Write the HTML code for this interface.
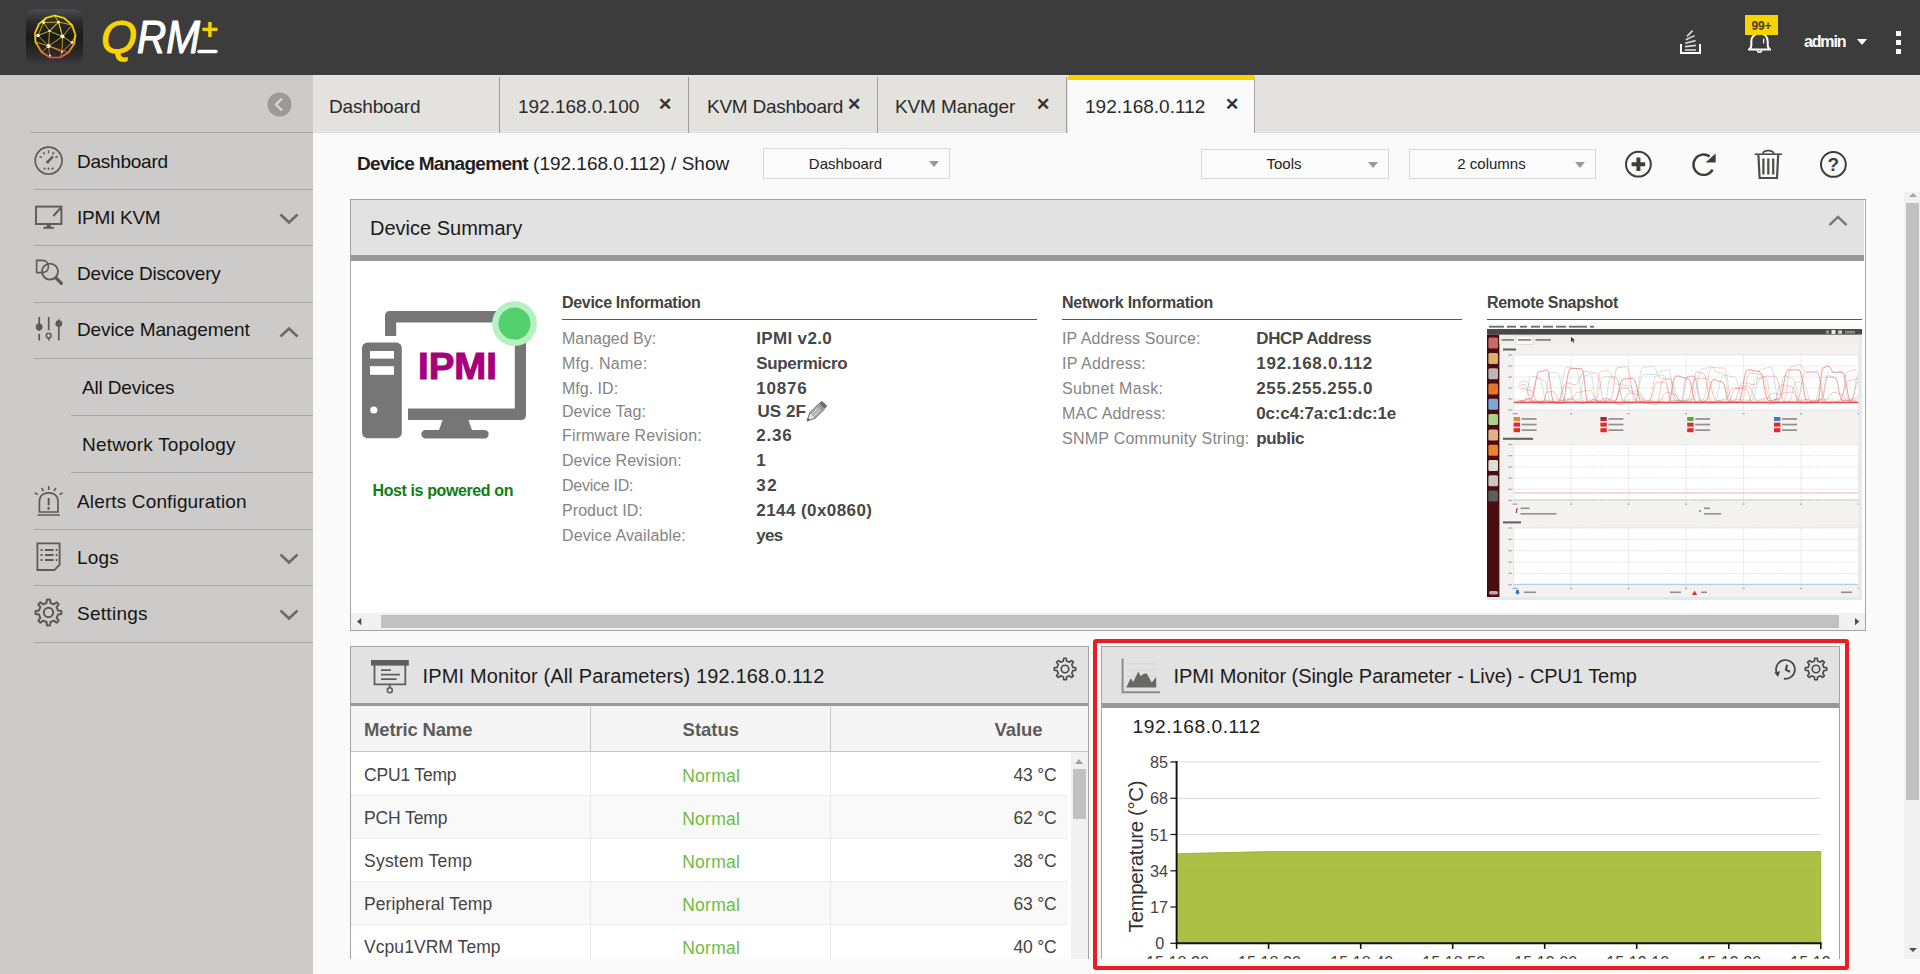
<!DOCTYPE html>
<html lang="en">
<head>
<meta charset="utf-8">
<title>QRM+ Device Management</title>
<style>
*{box-sizing:border-box;margin:0;padding:0}
html,body{width:1920px;height:974px;overflow:hidden;background:#fafafa;font-family:"Liberation Sans",sans-serif;color:#1c1c1c}
.abs{position:absolute}
#app{position:relative;width:1920px;height:974px;overflow:hidden}
/* top bar */
#top{position:absolute;left:0;top:0;width:1920px;height:75px;background:#3c3c3c;z-index:5}
/* sidebar */
#side{position:absolute;left:0;top:75px;width:313px;height:899px;background:#cccbc9}
.sline{position:absolute;height:1px;background:#a9a8a6;right:0}
.sitem{position:absolute;left:77px;font-size:19px;line-height:22px;color:#141414;white-space:nowrap}
.sico{position:absolute;left:33px}
.chev{position:absolute;left:279px}
/* tabs */
#tabs{position:absolute;left:313px;top:75px;width:1607px;height:58px;background:#e3e2de}
.tab{position:absolute;top:0;height:58px;border-right:1px solid transparent;font-size:19px;line-height:22px;color:#2b2b2b;white-space:nowrap}
.tab:after{content:"";position:absolute;right:-1px;top:2px;bottom:0;width:1px;background:#9f9e9b}
.tab.act:after{display:none}
.tab span.t{position:absolute;top:21px}
.tab span.x{position:absolute;top:19px;font-size:17px;font-weight:bold;color:#333}
.tab.act{background:#fafafa;border-top:5px solid #f5d200;border-right:1px solid #a9a8a5;border-radius:3px 3px 0 0}
/* content */
#main{position:absolute;left:313px;top:133px;width:1607px;height:841px;background:#fafafa;overflow:hidden}
.sel{position:absolute;height:31px;border:1px solid #d9d9d9;background:#fbfbfb;font-size:15px;line-height:29px;color:#222;text-align:center}
.sel:after{content:"";position:absolute;right:10px;top:12px;border:5px solid transparent;border-top:6px solid #9a9a9a;border-bottom:0}
.panel{position:absolute;border:1px solid #a3a3a3;background:#fff;overflow:hidden}
.phead{position:absolute;left:0;top:0;right:0;height:55px;background:#e2e2e2}
.pstrip{position:absolute;left:0;right:0;top:55px;height:5px;background:#9a9996}
.ptitle{position:absolute;font-size:20px;line-height:24px;color:#1b1b1b;white-space:nowrap}
</style>
</head>
<body>
<div id="app">

<!-- ============ TOP BAR ============ -->
<div id="top">

<!-- app icon -->
<svg class="abs" style="left:25px;top:8px" width="59" height="59" viewBox="0 0 59 59">
  <defs>
    <linearGradient id="gIcon" x1="0" y1="0" x2="0" y2="1">
      <stop offset="0" stop-color="#4c4d50"/><stop offset="0.22" stop-color="#2c2c2e"/><stop offset="0.5" stop-color="#1a1a1a"/><stop offset="0.8" stop-color="#2b2b2d"/><stop offset="1" stop-color="#3d3e41"/>
    </linearGradient>
    <linearGradient id="gSph" x1="0" y1="0" x2="0" y2="1">
      <stop offset="0" stop-color="#ffe600"/><stop offset="0.6" stop-color="#ffd200"/><stop offset="0.8" stop-color="#ff9a1e"/><stop offset="1" stop-color="#f0541e"/>
    </linearGradient>
    <filter id="glow" x="-20%" y="-20%" width="140%" height="140%"><feGaussianBlur stdDeviation="0.7"/></filter>
  </defs>
  <rect x="1" y="1" width="57" height="57" rx="9" fill="url(#gIcon)"/>
  <g fill="none" stroke="url(#gSph)" stroke-linejoin="round">
    <polygon filter="url(#glow)" stroke-width="2.2" opacity=".55" points="29.5,7.5 39,10 47,17 50.5,27 49,36 43.5,44.5 35,49.5 25,49.5 16.5,44 10.5,34 10,25 14,16 21,10"/>
    <polygon stroke-width="1.1" points="29.5,7.5 39,10 47,17 50.5,27 49,36 43.5,44.5 35,49.5 25,49.5 16.5,44 10.5,34 10,25 14,16 21,10"/>
    <g stroke-width="0.75">
      <path d="M18.5,14.5 L33.5,14 L24.5,23 Z M33.5,14 L47,17 L37.5,28.5 Z M24.5,23 L37.5,28.5 L23.5,38 Z M18.5,14.5 L13,27.5 L24.5,23 M13,27.5 L23.5,38 L10.5,34 M23.5,38 L25,49.5 M23.5,38 L16.5,44 M23.5,38 L37,44 L35,49.5 M37.5,28.5 L47,34.5 L50.5,27 M37.5,28.5 L37,44 L47,34.5 M33.5,14 L29.5,7.5 M18.5,14.5 L21,10 M23.5,38 L43.5,44.5 M24.5,23 L33.5,14 L37.5,28.5"/>
    </g>
  </g>
  <g fill="#fff">
    <circle cx="18.5" cy="14.5" r="1.3"/><circle cx="33.5" cy="14" r="1.3"/><circle cx="24.5" cy="23" r="1.1"/>
    <circle cx="13" cy="27.5" r="1.7"/><circle cx="37.5" cy="28.5" r="2"/><circle cx="23.5" cy="38" r="2"/>
    <circle cx="47" cy="34.5" r="1.3"/><circle cx="37" cy="44" r="0.9"/><circle cx="25" cy="47.5" r="0.9"/>
  </g>
</svg>
<!-- brand -->
<svg class="abs" style="left:98px;top:12px" width="130" height="50" viewBox="0 0 130 50">
  <g font-family="Liberation Sans, sans-serif" font-style="italic" stroke-width="1.1" stroke-linejoin="round">
    <text x="3" y="41" font-size="46" fill="#f7d300" stroke="#f7d300" textLength="36" lengthAdjust="spacingAndGlyphs">Q</text>
    <text x="39" y="41" font-size="46" fill="#ffffff" stroke="#ffffff" textLength="63" lengthAdjust="spacingAndGlyphs">RM</text>
    <text x="103" y="27" font-size="30" font-weight="bold" font-style="normal" fill="#f7d300" stroke="none">+</text>
  </g>
  <path d="M101,39.5 H118" stroke="#fff" stroke-width="3.6" stroke-linecap="round"/>
</svg>
<!-- download/stack icon -->
<svg class="abs" style="left:1678px;top:27px" width="26" height="30" viewBox="0 0 26 30">
  <path d="M3,17 V26 H22 V17" fill="none" stroke="#fff" stroke-width="2"/>
  <g stroke="#d8d8d8" stroke-width="1.6" fill="none">
    <path d="M7,23 H18"/><path d="M7,19.6 L18,18.4"/><path d="M7.2,16.2 L17.6,13.6"/><path d="M7.8,12.8 L16.6,8.6"/><path d="M9,9.4 L14.6,3.6"/>
  </g>
</svg>
<!-- bell -->
<svg class="abs" style="left:1746px;top:30px" width="28" height="26" viewBox="0 0 28 26">
  <path d="M2.8,19.6 C4.8,18.6 5.3,17.2 5.3,15 V11.5 C5.3,6.5 8.5,3.6 13.5,3.6 C18.5,3.6 21.7,6.5 21.7,11.5 V15 C21.7,17.2 22.2,18.6 24.2,19.6 Z" fill="none" stroke="#fff" stroke-width="2" stroke-linejoin="round"/>
  <path d="M11.2,20.5 a2.4,2.4 0 0 0 4.6,0" fill="none" stroke="#fff" stroke-width="1.6"/>
  <path d="M17.6,8.5 V13.4" stroke="#fff" stroke-width="1.3"/>
</svg>
<div class="abs" style="left:1745px;top:15px;width:33px;height:20px;background:#f7d300;color:#453f1c;font-size:12px;font-weight:bold;line-height:22px;text-align:center;letter-spacing:-.2px">99+</div>
<div class="abs" style="left:1804px;top:32px;font-size:16px;line-height:20px;font-weight:bold;color:#fff;letter-spacing:-1.15px">admin</div>
<div class="abs" style="left:1857px;top:39px;width:0;height:0;border-left:5px solid transparent;border-right:5px solid transparent;border-top:6px solid #fff"></div>
<div class="abs" style="left:1896px;top:30.5px;width:5px;height:5px;background:#fff"></div>
<div class="abs" style="left:1896px;top:39.5px;width:5px;height:5px;background:#fff"></div>
<div class="abs" style="left:1896px;top:48.5px;width:5px;height:5px;background:#fff"></div>

</div>

<!-- ============ SIDEBAR ============ -->
<div id="side">

<!-- collapse button -->
<svg class="abs" style="left:267px;top:17px" width="25" height="25" viewBox="0 0 25 25"><circle cx="12.5" cy="12.5" r="12" fill="#9b9a98"/><path d="M15,6.5 L9,12.5 L15,18.5" fill="none" stroke="#d6d5d3" stroke-width="2.4"/></svg>
<div class="sline" style="top:57px;left:30px"></div>
<div class="sline" style="top:114px;left:34px"></div>
<div class="sline" style="top:170px;left:34px"></div>
<div class="sline" style="top:227px;left:34px"></div>
<div class="sline" style="top:283px;left:34px"></div>
<div class="sline" style="top:340px;left:71px"></div>
<div class="sline" style="top:397px;left:71px"></div>
<div class="sline" style="top:454px;left:34px"></div>
<div class="sline" style="top:510px;left:34px"></div>
<div class="sline" style="top:567px;left:34px"></div>

<div class="sitem" style="top:76px;letter-spacing:-0.24px">Dashboard</div>
<div class="sitem" style="top:132px;letter-spacing:-0.27px">IPMI KVM</div>
<div class="sitem" style="top:188px;letter-spacing:-0.2px">Device Discovery</div>
<div class="sitem" style="top:244px;letter-spacing:-0.1px">Device Management</div>
<div class="sitem" style="top:302px;left:82px;letter-spacing:-0.15px">All Devices</div>
<div class="sitem" style="top:359px;left:82px;letter-spacing:0.19px">Network Topology</div>
<div class="sitem" style="top:416px;letter-spacing:0.14px">Alerts Configuration</div>
<div class="sitem" style="top:472px;letter-spacing:0.2px">Logs</div>
<div class="sitem" style="top:528px;letter-spacing:0.28px">Settings</div>

<!-- chevrons -->
<svg class="chev" style="top:137px" width="20" height="14" viewBox="0 0 20 14"><path d="M1.5,2.5 L10,10.5 L18.5,2.5" fill="none" stroke="#6b6a68" stroke-width="2.6"/></svg>
<svg class="chev" style="top:250px" width="20" height="14" viewBox="0 0 20 14"><path d="M1.5,11.5 L10,3.5 L18.5,11.5" fill="none" stroke="#6b6a68" stroke-width="2.6"/></svg>
<svg class="chev" style="top:477px" width="20" height="14" viewBox="0 0 20 14"><path d="M1.5,2.5 L10,10.5 L18.5,2.5" fill="none" stroke="#6b6a68" stroke-width="2.6"/></svg>
<svg class="chev" style="top:533px" width="20" height="14" viewBox="0 0 20 14"><path d="M1.5,2.5 L10,10.5 L18.5,2.5" fill="none" stroke="#6b6a68" stroke-width="2.6"/></svg>

<!-- sidebar icons -->
<svg class="sico" style="top:70px" width="32" height="32" viewBox="0 0 32 32" fill="none" stroke="#5c5b59" stroke-width="1.7">
  <circle cx="15.6" cy="15.6" r="13.4"/>
  <path d="M15.6,5.6 V8.2 M10.4,7.2 L11.6,9.4 M20.8,7.2 L19.6,9.4 M6.6,11.4 L8.8,12.6 M24.6,11.4 L22.4,12.6" stroke-width="1.5"/>
  <path d="M14.8,16.8 L19.4,12" stroke-width="2.4" stroke-linecap="round"/>
  <circle cx="14.6" cy="17" r="1.6" fill="#5c5b59" stroke="none"/>
  <g fill="#5c5b59" stroke="none"><circle cx="11.6" cy="23.6" r="1.1"/><circle cx="15.6" cy="23.6" r="1.1"/><circle cx="19.6" cy="23.6" r="1.1"/></g>
</svg>
<svg class="sico" style="top:128px" width="32" height="28" viewBox="0 0 32 28" fill="none" stroke="#5c5b59" stroke-width="1.9">
  <rect x="3" y="3.6" width="25.4" height="17.4"/>
  <path d="M15.7,21 V24.6" stroke-width="4"/><path d="M10.4,24.8 H21"/>
  <path d="M20.4,13 L27.6,5"/>
</svg>
<svg class="sico" style="top:181px" width="34" height="34" viewBox="0 0 34 34" fill="none" stroke="#5c5b59" stroke-width="1.8">
  <path d="M3.6,16.6 V4.4 H9 C13.4,4.4 15.4,7.4 15.4,10.6 C15.4,13.6 13.6,16.6 9.4,16.6 Z" stroke-width="1.6"/>
  <circle cx="17" cy="15.6" r="8"/>
  <path d="M23,21.8 L28.4,27.4" stroke-width="3.2" stroke-linecap="round"/>
</svg>
<svg class="sico" style="top:238px" width="32" height="32" viewBox="0 0 32 32" fill="none" stroke="#5c5b59" stroke-width="1.7">
  <path d="M6.2,4 V27.6 M15.7,4 V27.6 M25.8,4 V27.6"/>
  <circle cx="6.2" cy="14" r="3.4" fill="#5c5b59" stroke="none"/>
  <circle cx="6.2" cy="19.3" r="1.6" fill="#cccbc9" stroke="none"/>
  <circle cx="15.7" cy="22.6" r="2.4" fill="#cccbc9" stroke-width="1.5"/>
  <circle cx="15.7" cy="18.6" r="1.4" fill="#cccbc9" stroke="none"/>
  <circle cx="25.8" cy="10.6" r="3.4" fill="#5c5b59" stroke="none"/>
  <circle cx="25.8" cy="5.3" r="1.2" fill="#cccbc9" stroke="none"/>
</svg>
<svg class="sico" style="top:407px" width="32" height="36" viewBox="0 0 32 36" fill="none" stroke="#5c5b59" stroke-width="1.7">
  <path d="M6.4,30 V19.4 C6.4,13.6 10.6,10.8 15.7,10.8 C20.8,10.8 25,13.6 25,19.4 V30 Z"/>
  <path d="M4.6,33 H26.8" stroke-width="1.5"/>
  <path d="M15.7,16 V23.4" stroke-width="2"/>
  <circle cx="15.7" cy="26.4" r="1.3" fill="#5c5b59" stroke="none"/>
  <path d="M15.7,4 V8 M8.6,6 L10.4,9.2 M22.8,6 L21,9.2 M1.8,10.8 L4.8,12.6 M29.6,10.8 L26.6,12.6" stroke-width="1.6"/>
</svg>
<svg class="sico" style="top:464px" width="32" height="36" viewBox="0 0 32 36" fill="none" stroke="#5c5b59" stroke-width="1.8">
  <path d="M4.4,4.4 H26.6 V25.6 L21.4,31 H4.4 Z"/>
  <g stroke-width="1.8"><path d="M7.6,11 H9.6 M12,11 H20.6 M22.8,11 H24.4 M7.6,16 H9.6 M12,16 H20.6 M22.8,16 H24.4 M7.6,21 H9.6 M12,21 H20.6 M22.8,21 H24.4"/></g>
</svg>
<svg class="sico" style="top:522.5px;left:34px" width="29" height="29" viewBox="0 0 28 28" fill="none" stroke="#5a5957" stroke-width="1.9" stroke-linejoin="round">
  <path d="M12.09,4.80 L12.52,1.49 L15.48,1.49 L15.91,4.80 L19.16,6.14 L21.80,4.11 L23.89,6.20 L21.86,8.84 L23.20,12.09 L26.51,12.52 L26.51,15.48 L23.20,15.91 L21.86,19.16 L23.89,21.80 L21.80,23.89 L19.16,21.86 L15.91,23.20 L15.48,26.51 L12.52,26.51 L12.09,23.20 L8.84,21.86 L6.20,23.89 L4.11,21.80 L6.14,19.16 L4.80,15.91 L1.49,15.48 L1.49,12.52 L4.80,12.09 L6.14,8.84 L4.11,6.20 L6.20,4.11 L8.84,6.14 Z"/>
  <circle cx="14" cy="14" r="4.5"/>
</svg>


</div>

<!-- ============ TABS ============ -->
<div id="tabs">

<div class="tab" style="left:0;width:187px"><span class="t" style="left:16px;letter-spacing:-0.17px">Dashboard</span></div>
<div class="tab" style="left:187px;width:189px"><span class="t" style="left:18px;letter-spacing:-0.02px">192.168.0.100</span><span class="x" style="left:158px">&#10005;</span></div>
<div class="tab" style="left:376px;width:189px"><span class="t" style="left:18px;letter-spacing:-0.25px">KVM Dashboard</span><span class="x" style="left:158px">&#10005;</span></div>
<div class="tab" style="left:565px;width:189px"><span class="t" style="left:17px;letter-spacing:-0.12px">KVM Manager</span><span class="x" style="left:158px">&#10005;</span></div>
<div class="tab act" style="left:755px;width:187px"><span class="t" style="left:17px;top:16px;letter-spacing:0.02px">192.168.0.112</span><span class="x" style="left:157px;top:14px">&#10005;</span></div>

</div>

<!-- ============ MAIN ============ -->
<div id="main">
<!-- header row (coords relative to #main: x-313, y-133) -->
<div class="abs" style="left:44px;top:20px;font-size:19px;line-height:22px;white-space:nowrap;color:#1f1f1f"><b style="letter-spacing:-.7px">Device Management</b> (192.168.0.112) / Show</div>
<div class="sel" style="left:450px;top:15px;width:187px;padding-right:22px">Dashboard</div>
<div class="sel" style="left:888px;top:16px;width:188px;height:30px;line-height:28px;padding-right:22px">Tools</div>
<div class="sel" style="left:1096px;top:16px;width:187px;height:30px;line-height:28px;padding-right:22px">2 columns</div>

<svg class="abs" style="left:1310px;top:16px" width="31" height="31" viewBox="0 0 31 31"><circle cx="15.4" cy="15.2" r="12.4" fill="none" stroke="#3e3d3a" stroke-width="2"/><path d="M15.4,8.4 V22 M8.6,15.2 H22.2" stroke="#3e3d3a" stroke-width="4"/></svg>
<svg class="abs" style="left:1375px;top:16px" width="32" height="32" viewBox="0 0 32 32"><path d="M24.6,20.6 A10.2,10.2 0 1 1 21.6,7.4" fill="none" stroke="#3e3d3a" stroke-width="2.4"/><path d="M27.6,4.4 V13.4 H17.6 Z" fill="#3e3d3a"/></svg>
<svg class="abs" style="left:1439px;top:14px" width="34" height="34" viewBox="0 0 34 34" fill="none" stroke="#4e4d4a"><path d="M2.6,7.2 H30" stroke-width="1.6"/><path d="M10.6,6.8 C11.6,2.6 21,2.6 22,6.8" stroke-width="1.6"/><path d="M6.4,7.6 L7.6,31 H25 L26.2,7.6" stroke-width="2.2"/><path d="M11.4,11.4 V27.4 M16.3,11.4 V27.4 M21.2,11.4 V27.4" stroke-width="2.2"/></svg>
<svg class="abs" style="left:1505px;top:16px" width="31" height="31" viewBox="0 0 31 31"><circle cx="15.4" cy="15.4" r="12.4" fill="none" stroke="#3e3d3a" stroke-width="2"/><text x="15.4" y="22.2" text-anchor="middle" font-family="Liberation Sans, sans-serif" font-weight="bold" font-size="19" fill="#3e3d3a">?</text></svg>

<!-- right page scrollbar -->
<div class="abs" style="left:1591px;top:59px;width:16px;height:767px;background:#f1f1f1"></div>
<div class="abs" style="left:1593px;top:70px;width:13px;height:597px;background:#c1c1c1"></div>
<div class="abs" style="left:1595.5px;top:60px;width:0;height:0;border-left:4px solid transparent;border-right:4px solid transparent;border-bottom:4px solid #a3a3a3"></div>
<div class="abs" style="left:1595.5px;top:815px;width:0;height:0;border-left:4px solid transparent;border-right:4px solid transparent;border-top:4px solid #505050"></div>

<!-- ===== Device Summary panel ===== -->
<div class="panel" style="left:37px;top:66px;width:1516px;height:432px">
  <div class="phead" style="border-right:1px solid #fff"></div><div class="pstrip" style="height:6px;right:1px"></div>
  <div class="ptitle" style="left:19px;top:16px">Device Summary</div>
  <svg class="abs" style="left:1476px;top:14px" width="22" height="14" viewBox="0 0 22 14"><path d="M2.4,11.2 L11,3 L19.6,11.2" fill="none" stroke="#7b7875" stroke-width="2.4"/></svg>
<div class="abs" style="left:211.0px;top:129.2px;font-size:16px;line-height:20px;color:#858585;white-space:nowrap;letter-spacing:-0.02px">Managed By:</div>
<div class="abs" style="left:405.3px;top:128.5px;font-size:17px;line-height:20px;color:#474747;white-space:nowrap;font-weight:700;letter-spacing:0.33px">IPMI v2.0</div>
<div class="abs" style="left:211.0px;top:153.8px;font-size:16px;line-height:20px;color:#858585;white-space:nowrap;letter-spacing:0.27px">Mfg. Name:</div>
<div class="abs" style="left:405.3px;top:153.8px;font-size:17px;line-height:20px;color:#474747;white-space:nowrap;font-weight:700;letter-spacing:-0.35px">Supermicro</div>
<div class="abs" style="left:211.0px;top:178.8px;font-size:16px;line-height:20px;color:#858585;white-space:nowrap;letter-spacing:0.01px">Mfg. ID:</div>
<div class="abs" style="left:405.3px;top:178.8px;font-size:17px;line-height:20px;color:#474747;white-space:nowrap;font-weight:700;letter-spacing:0.78px">10876</div>
<div class="abs" style="left:211.0px;top:201.8px;font-size:16px;line-height:20px;color:#858585;white-space:nowrap;letter-spacing:0.07px">Device Tag:</div>
<div class="abs" style="left:406.5px;top:202.1px;font-size:17px;line-height:20px;color:#474747;white-space:nowrap;font-weight:700;letter-spacing:0.08px">US 2F</div>
<div class="abs" style="left:211.0px;top:225.8px;font-size:16px;line-height:20px;color:#858585;white-space:nowrap;letter-spacing:0.16px">Firmware Revision:</div>
<div class="abs" style="left:405.3px;top:226.1px;font-size:17px;line-height:20px;color:#474747;white-space:nowrap;font-weight:700;letter-spacing:0.77px">2.36</div>
<div class="abs" style="left:211.0px;top:250.8px;font-size:16px;line-height:20px;color:#858585;white-space:nowrap;letter-spacing:0.03px">Device Revision:</div>
<div class="abs" style="left:405.3px;top:251.1px;font-size:17px;line-height:20px;color:#474747;white-space:nowrap;font-weight:700">1</div>
<div class="abs" style="left:211.0px;top:275.8px;font-size:16px;line-height:20px;color:#858585;white-space:nowrap;letter-spacing:-0.26px">Device ID:</div>
<div class="abs" style="left:405.3px;top:276.1px;font-size:17px;line-height:20px;color:#474747;white-space:nowrap;font-weight:700;letter-spacing:1.38px">32</div>
<div class="abs" style="left:211.0px;top:300.8px;font-size:16px;line-height:20px;color:#858585;white-space:nowrap;letter-spacing:0.07px">Product ID:</div>
<div class="abs" style="left:405.3px;top:301.1px;font-size:17px;line-height:20px;color:#474747;white-space:nowrap;font-weight:700;letter-spacing:0.42px">2144 (0x0860)</div>
<div class="abs" style="left:211.0px;top:325.8px;font-size:16px;line-height:20px;color:#858585;white-space:nowrap;letter-spacing:0.13px">Device Available:</div>
<div class="abs" style="left:405.3px;top:326.1px;font-size:17px;line-height:20px;color:#474747;white-space:nowrap;font-weight:700;letter-spacing:-0.69px">yes</div>
<div class="abs" style="left:711.0px;top:128.6px;font-size:16px;line-height:20px;color:#858585;white-space:nowrap;letter-spacing:0.1px">IP Address Source:</div>
<div class="abs" style="left:905.3px;top:128.9px;font-size:17px;line-height:20px;color:#474747;white-space:nowrap;font-weight:700;letter-spacing:-0.41px">DHCP Address</div>
<div class="abs" style="left:711.0px;top:153.5px;font-size:16px;line-height:20px;color:#858585;white-space:nowrap;letter-spacing:0.22px">IP Address:</div>
<div class="abs" style="left:905.3px;top:153.8px;font-size:17px;line-height:20px;color:#474747;white-space:nowrap;font-weight:700;letter-spacing:0.68px">192.168.0.112</div>
<div class="abs" style="left:711.0px;top:178.7px;font-size:16px;line-height:20px;color:#858585;white-space:nowrap;letter-spacing:0.28px">Subnet Mask:</div>
<div class="abs" style="left:905.3px;top:179.0px;font-size:17px;line-height:20px;color:#474747;white-space:nowrap;font-weight:700;letter-spacing:0.61px">255.255.255.0</div>
<div class="abs" style="left:711.0px;top:204.0px;font-size:16px;line-height:20px;color:#858585;white-space:nowrap;letter-spacing:0.14px">MAC Address:</div>
<div class="abs" style="left:905.3px;top:203.6px;font-size:17px;line-height:20px;color:#474747;white-space:nowrap;font-weight:700;letter-spacing:-0.17px">0c:c4:7a:c1:dc:1e</div>
<div class="abs" style="left:711.0px;top:228.5px;font-size:16px;line-height:20px;color:#858585;white-space:nowrap;letter-spacing:0.25px">SNMP Community String:</div>
<div class="abs" style="left:905.3px;top:228.8px;font-size:17px;line-height:20px;color:#474747;white-space:nowrap;font-weight:700;letter-spacing:-0.37px">public</div>
<div class="abs" style="left:211.0px;top:92.5px;font-size:16px;line-height:20px;color:#424242;white-space:nowrap;font-weight:700;letter-spacing:-0.31px">Device Information</div>
<div class="abs" style="left:711.0px;top:92.5px;font-size:16px;line-height:20px;color:#424242;white-space:nowrap;font-weight:700;letter-spacing:-0.24px">Network Information</div>
<div class="abs" style="left:1136.0px;top:92.9px;font-size:16px;line-height:20px;color:#424242;white-space:nowrap;font-weight:700;letter-spacing:-0.33px">Remote Snapshot</div>
<div class="abs" style="left:21.5px;top:280.5px;font-size:16px;line-height:20px;color:#0e7d12;white-space:nowrap;font-weight:700;letter-spacing:-0.39px">Host is powered on</div>
<div class="abs" style="left:211px;top:119px;width:475px;height:1px;background:#555"></div>
<div class="abs" style="left:711px;top:119px;width:400px;height:1px;background:#555"></div>
<div class="abs" style="left:1136px;top:119px;width:375px;height:1px;background:#555"></div>
<div class="abs" style="left:0;top:413px;width:1514px;height:17px;background:#f1f1f1"></div>
<div class="abs" style="left:30px;top:415px;width:1458px;height:13px;background:#c1c1c1"></div>
<svg class="abs" style="left:4px;top:415px" width="10" height="13" viewBox="355 615 10 13"><path d="M361.3,617.9 V625.3 L357,621.6 Z" fill="#4d4d4d"/></svg>
<svg class="abs" style="left:1501px;top:415px" width="10" height="13" viewBox="1852 615 10 13"><path d="M1855,617.9 V625.3 L1859.3,621.6 Z" fill="#4d4d4d"/></svg>
<svg class="abs" style="left:4px;top:95px" width="190" height="150" viewBox="355 295 190 150">
  <path d="M389.5,311 H521.5 a4.5,4.5 0 0 1 4.5,4.5 V415.5 a4.5,4.5 0 0 1 -4.5,4.5 H408 V408.6 H514.8 V322.5 H396.2 V336 H385 V315.5 a4.5,4.5 0 0 1 4.5,-4.5 Z" fill="#767676"/>
  <path d="M443,419 H468 L472,430 H484.5 a4,4 0 0 1 0,8.4 H425.5 a4,4 0 0 1 0,-8.4 H439 Z" fill="#767676"/>
  <rect x="362" y="342.6" width="39.8" height="95.6" rx="5.5" fill="#767676" stroke="#fff" stroke-width="0"/>
  <rect x="370" y="351" width="24" height="7.6" fill="#fff"/>
  <rect x="370" y="366.2" width="24" height="8.6" fill="#fff"/>
  <circle cx="373.8" cy="410" r="3.6" fill="#fff"/>
  <circle cx="514.5" cy="323.6" r="22.4" fill="#b6f1c1"/>
  <circle cx="514.5" cy="323.6" r="16" fill="#53cf6c"/>
  <text x="457.5" y="379" text-anchor="middle" font-family="Liberation Sans, sans-serif" font-weight="bold" font-size="36" fill="#a6007c" stroke="#a6007c" stroke-width="1" textLength="79" lengthAdjust="spacingAndGlyphs">IPMI</text>
</svg>
<svg class="abs" style="left:450px;top:195px" width="32" height="32" viewBox="-16 -16 32 32"><g transform="rotate(45)"><path d="M-3.9,-6 H3.9 V6 L0,14 L-3.9,6 Z" fill="#a9a9a9" stroke="#747474" stroke-width=".9" stroke-linejoin="round"/><path d="M-3.9,6 L0,14 L3.9,6 Z" fill="#e6e6e6" stroke="#747474" stroke-width=".9" stroke-linejoin="round"/><path d="M-1.3,-3.6 V6.5 M1.3,-3.6 V6.5" stroke="#ececec" stroke-width=".9"/><path d="M-3.9,-9.8 a1.5,1.5 0 0 1 1.5,-1 H2.4 a1.5,1.5 0 0 1 1.5,1 V-6.6 H-3.9 Z" fill="#6e6e6e"/><path d="M-4.3,-5.6 H4.3 M-4.3,-3.9 H4.3" stroke="#8b8b8b" stroke-width=".8"/><path d="M-1.3,11.4 L0,14 L1.3,11.4 Z" fill="#555"/></g></svg>

<svg class="abs" style="left:1136px;top:123px" width="375" height="277" viewBox="1487 323 375 277">
<rect x="1487" y="323" width="375" height="277" fill="#f3f2f0"/>
<rect x="1487" y="323" width="375" height="6" fill="#fbfbfb"/>
<rect x="1489" y="325.8" width="15" height="1.8" fill="#4a4a4a" opacity=".8"/>
<rect x="1507" y="325.8" width="9" height="1.8" fill="#4a4a4a" opacity=".8"/>
<rect x="1520" y="325.8" width="7" height="1.8" fill="#4a4a4a" opacity=".8"/>
<rect x="1531" y="325.8" width="9" height="1.8" fill="#4a4a4a" opacity=".8"/>
<rect x="1543" y="325.8" width="10" height="1.8" fill="#4a4a4a" opacity=".8"/>
<rect x="1556" y="325.8" width="10" height="1.8" fill="#4a4a4a" opacity=".8"/>
<rect x="1569" y="325.8" width="18" height="1.8" fill="#4a4a4a" opacity=".8"/>
<rect x="1590" y="325.8" width="4" height="1.8" fill="#4a4a4a" opacity=".8"/>
<rect x="1487" y="329" width="375" height="5.8" fill="#4a4842"/>
<rect x="1826" y="330.6" width="3" height="3" fill="#999"/><rect x="1831.5" y="330" width="4" height="4" fill="#e8e8e8"/><rect x="1838" y="330.4" width="4" height="3.4" fill="#ccc"/><rect x="1845" y="330.8" width="10" height="2.6" fill="#8a8880"/>
<rect x="1487" y="334.8" width="12.4" height="265.2" fill="#4a0d0f"/>
<rect x="1488.4" y="337.6" width="9.6" height="11" rx="1.5" fill="#c76a6a"/>
<rect x="1488.4" y="352.9" width="9.6" height="11" rx="1.5" fill="#d9b26a"/>
<rect x="1488.4" y="368.2" width="9.6" height="11" rx="1.5" fill="#bdb7b4"/>
<rect x="1488.4" y="383.5" width="9.6" height="11" rx="1.5" fill="#e4752b"/>
<rect x="1488.4" y="398.8" width="9.6" height="11" rx="1.5" fill="#7da7d9"/>
<rect x="1488.4" y="414.1" width="9.6" height="11" rx="1.5" fill="#a9d38c"/>
<rect x="1488.4" y="429.4" width="9.6" height="11" rx="1.5" fill="#e2b089"/>
<rect x="1488.4" y="444.7" width="9.6" height="11" rx="1.5" fill="#e8842c"/>
<rect x="1488.4" y="460.0" width="9.6" height="11" rx="1.5" fill="#e0dcd6"/>
<rect x="1488.4" y="475.3" width="9.6" height="11" rx="1.5" fill="#c9c5c0"/>
<rect x="1488.4" y="490.6" width="9.6" height="11" rx="1.5" fill="#57605c"/>
<rect x="1489" y="591" width="9" height="3.5" rx="1.5" fill="#b9a9a6"/>
<rect x="1499.4" y="334.8" width="362.6" height="9.5" fill="#efeeec"/>
<rect x="1516" y="336" width="17" height="8.3" fill="#fbfbfb" stroke="#c8c6c2" stroke-width=".5"/>
<rect x="1501.5" y="339" width="12.5" height="1.8" fill="#666" opacity=".75"/>
<rect x="1518" y="339" width="13" height="1.8" fill="#666" opacity=".75"/>
<rect x="1535.5" y="339" width="15.5" height="1.8" fill="#666" opacity=".75"/>
<path d="M1571,337 l0,5 l1.4,-1.3 l1,2 l.8,-.4 l-1,-2 l1.8,0 z" fill="#333"/>
<rect x="1503" y="348.5" width="13" height="2" fill="#444" opacity=".85"/>
<rect x="1503" y="437.8" width="30" height="2" fill="#444" opacity=".85"/>
<rect x="1503" y="521.4" width="18" height="2" fill="#444" opacity=".85"/>
<rect x="1513.6" y="355" width="345" height="55" fill="#fff"/>
<rect x="1508.5" y="354.4" width="3.4" height="1.2" fill="#888" opacity=".7"/>
<rect x="1508.5" y="365.4" width="3.4" height="1.2" fill="#888" opacity=".7"/>
<rect x="1508.5" y="376.4" width="3.4" height="1.2" fill="#888" opacity=".7"/>
<rect x="1508.5" y="387.4" width="3.4" height="1.2" fill="#888" opacity=".7"/>
<rect x="1508.5" y="398.4" width="3.4" height="1.2" fill="#888" opacity=".7"/>
<rect x="1508.5" y="409.4" width="3.4" height="1.2" fill="#888" opacity=".7"/>
<rect x="1512.6" y="413.0" width="5" height="1.3" fill="#888" opacity=".7"/>
<rect x="1570.1" y="413.0" width="2" height="1.3" fill="#888" opacity=".7"/>
<rect x="1627.6" y="413.0" width="2" height="1.3" fill="#888" opacity=".7"/>
<rect x="1685.1" y="413.0" width="2" height="1.3" fill="#888" opacity=".7"/>
<rect x="1742.6" y="413.0" width="2" height="1.3" fill="#888" opacity=".7"/>
<rect x="1800.1" y="413.0" width="2" height="1.3" fill="#888" opacity=".7"/>
<rect x="1857.6" y="413.0" width="2" height="1.3" fill="#888" opacity=".7"/>
<path d="M1513.6,355.0H1858.6M1513.6,366.0H1858.6M1513.6,377.0H1858.6M1513.6,388.0H1858.6M1513.6,399.0H1858.6M1513.6,410.0H1858.6M1513.6,355V412M1571.1,355V412M1628.6,355V412M1686.1,355V412M1743.6,355V412M1801.1,355V412M1858.6,355V412" stroke="#c9c9c9" stroke-width=".6" stroke-dasharray="1.5 1.2" fill="none"/>
<rect x="1513.6" y="444.5" width="345" height="56.0" fill="#fff"/>
<rect x="1508.5" y="443.9" width="3.4" height="1.2" fill="#888" opacity=".7"/>
<rect x="1508.5" y="455.1" width="3.4" height="1.2" fill="#888" opacity=".7"/>
<rect x="1508.5" y="466.3" width="3.4" height="1.2" fill="#888" opacity=".7"/>
<rect x="1508.5" y="477.5" width="3.4" height="1.2" fill="#888" opacity=".7"/>
<rect x="1508.5" y="488.7" width="3.4" height="1.2" fill="#888" opacity=".7"/>
<rect x="1508.5" y="499.9" width="3.4" height="1.2" fill="#888" opacity=".7"/>
<rect x="1512.6" y="503.5" width="5" height="1.3" fill="#888" opacity=".7"/>
<rect x="1570.1" y="503.5" width="2" height="1.3" fill="#888" opacity=".7"/>
<rect x="1627.6" y="503.5" width="2" height="1.3" fill="#888" opacity=".7"/>
<rect x="1685.1" y="503.5" width="2" height="1.3" fill="#888" opacity=".7"/>
<rect x="1742.6" y="503.5" width="2" height="1.3" fill="#888" opacity=".7"/>
<rect x="1800.1" y="503.5" width="2" height="1.3" fill="#888" opacity=".7"/>
<rect x="1857.6" y="503.5" width="2" height="1.3" fill="#888" opacity=".7"/>
<path d="M1513.6,444.5H1858.6M1513.6,455.7H1858.6M1513.6,466.9H1858.6M1513.6,478.1H1858.6M1513.6,489.3H1858.6M1513.6,500.5H1858.6M1513.6,444.5V502.5M1571.1,444.5V502.5M1628.6,444.5V502.5M1686.1,444.5V502.5M1743.6,444.5V502.5M1801.1,444.5V502.5M1858.6,444.5V502.5" stroke="#c9c9c9" stroke-width=".6" stroke-dasharray="1.5 1.2" fill="none"/>
<rect x="1513.6" y="528" width="345" height="56.799999999999955" fill="#fff"/>
<rect x="1508.5" y="527.4" width="3.4" height="1.2" fill="#888" opacity=".7"/>
<rect x="1508.5" y="538.8" width="3.4" height="1.2" fill="#888" opacity=".7"/>
<rect x="1508.5" y="550.1" width="3.4" height="1.2" fill="#888" opacity=".7"/>
<rect x="1508.5" y="561.5" width="3.4" height="1.2" fill="#888" opacity=".7"/>
<rect x="1508.5" y="572.8" width="3.4" height="1.2" fill="#888" opacity=".7"/>
<rect x="1508.5" y="584.2" width="3.4" height="1.2" fill="#888" opacity=".7"/>
<rect x="1512.6" y="587.8" width="5" height="1.3" fill="#888" opacity=".7"/>
<rect x="1570.1" y="587.8" width="2" height="1.3" fill="#888" opacity=".7"/>
<rect x="1627.6" y="587.8" width="2" height="1.3" fill="#888" opacity=".7"/>
<rect x="1685.1" y="587.8" width="2" height="1.3" fill="#888" opacity=".7"/>
<rect x="1742.6" y="587.8" width="2" height="1.3" fill="#888" opacity=".7"/>
<rect x="1800.1" y="587.8" width="2" height="1.3" fill="#888" opacity=".7"/>
<rect x="1857.6" y="587.8" width="2" height="1.3" fill="#888" opacity=".7"/>
<path d="M1513.6,528.0H1858.6M1513.6,539.4H1858.6M1513.6,550.7H1858.6M1513.6,562.1H1858.6M1513.6,573.4H1858.6M1513.6,584.8H1858.6M1513.6,528V586.8M1571.1,528V586.8M1628.6,528V586.8M1686.1,528V586.8M1743.6,528V586.8M1801.1,528V586.8M1858.6,528V586.8" stroke="#c9c9c9" stroke-width=".6" stroke-dasharray="1.5 1.2" fill="none"/>
<path d="M1520.3,400.7C1525.6,400.7 1525.6,398.7 1530.8,398.7C1535.1,398.7 1535.1,371.6 1539.4,371.6C1543.1,371.6 1543.1,370.1 1546.8,370.1C1550.5,370.1 1550.5,402.0 1554.2,402.0C1557.9,402.0 1557.9,403.4 1561.6,403.4C1566.2,403.4 1566.2,368.3 1570.9,368.3C1576.1,368.3 1576.1,368.7 1581.4,368.7C1584.9,368.7 1584.9,402.1 1588.4,402.1C1590.7,402.1 1590.7,399.7 1593.1,399.7C1597.5,399.7 1597.5,402.3 1602.0,402.3C1607.9,402.3 1607.9,402.5 1613.8,402.5C1618.7,402.5 1618.7,379.0 1623.7,379.0C1628.0,379.0 1628.0,378.3 1632.3,378.3C1637.5,378.3 1637.5,402.8 1642.8,402.8C1648.6,402.8 1648.6,402.4 1654.4,402.4C1658.3,402.4 1658.3,402.1 1662.2,402.1C1664.8,402.1 1664.8,403.2 1667.4,403.2C1671.9,403.2 1671.9,375.9 1676.3,375.9C1681.9,375.9 1681.9,378.3 1687.5,378.3C1692.2,378.3 1692.2,402.8 1697.0,402.8C1701.1,402.8 1701.1,401.2 1705.3,401.2C1709.4,401.2 1709.4,379.6 1713.5,379.6C1717.7,379.6 1717.7,381.8 1721.8,381.8C1725.9,381.8 1725.9,402.4 1730.0,402.4C1734.0,402.4 1734.0,401.9 1738.1,401.9C1743.0,401.9 1743.0,369.9 1748.0,369.9C1753.5,369.9 1753.5,371.3 1759.1,371.3C1764.2,371.3 1764.2,400.8 1769.2,400.8C1774.0,400.8 1774.0,399.1 1778.7,399.1C1783.6,399.1 1783.6,369.9 1788.5,369.9C1793.5,369.9 1793.5,369.8 1798.5,369.8C1803.2,369.8 1803.2,401.9 1807.9,401.9C1812.5,401.9 1812.5,402.7 1817.1,402.7C1820.3,402.7 1820.3,367.6 1823.5,367.6C1825.8,367.6 1825.8,366.1 1828.1,366.1C1831.2,366.1 1831.2,372.8 1834.4,372.8C1838.2,372.8 1838.2,372.0 1841.9,372.0C1846.8,372.0 1846.8,402.1 1851.7,402.1C1857.4,402.1 1857.4,402.7 1863.1,402.7" fill="none" stroke="#e8474a" stroke-width=".7" opacity="0.8"/>
<path d="M1518.3,400.9C1521.9,400.9 1521.9,402.5 1525.5,402.5C1528.8,402.5 1528.8,400.6 1532.1,400.6C1535.1,400.6 1535.1,401.5 1538.2,401.5C1542.5,401.5 1542.5,402.7 1546.9,402.7C1552.2,402.7 1552.2,402.7 1557.4,402.7C1562.0,402.7 1562.0,382.7 1566.6,382.7C1570.7,382.7 1570.7,384.7 1574.9,384.7C1580.0,384.7 1580.0,371.3 1585.1,371.3C1590.8,371.3 1590.8,373.3 1596.6,373.3C1600.6,373.3 1600.6,400.9 1604.6,400.9C1607.5,400.9 1607.5,399.6 1610.3,399.6C1614.0,399.6 1614.0,367.5 1617.6,367.5C1621.8,367.5 1621.8,366.8 1626.0,366.8C1631.2,366.8 1631.2,401.6 1636.5,401.6C1642.4,401.6 1642.4,401.2 1648.4,401.2C1653.0,401.2 1653.0,382.2 1657.5,382.2C1661.2,382.2 1661.2,382.6 1664.8,382.6C1668.6,382.6 1668.6,402.9 1672.4,402.9C1676.3,402.9 1676.3,402.4 1680.2,402.4C1683.7,402.4 1683.7,377.1 1687.2,377.1C1690.4,377.1 1690.4,376.0 1693.6,376.0C1698.0,376.0 1698.0,402.2 1702.4,402.2C1707.6,402.2 1707.6,401.9 1712.9,401.9C1717.9,401.9 1717.9,401.9 1723.0,401.9C1728.0,401.9 1728.0,401.7 1733.0,401.7C1738.1,401.7 1738.1,382.8 1743.3,382.8C1748.6,382.8 1748.6,384.5 1753.9,384.5C1759.1,384.5 1759.1,376.3 1764.3,376.3C1769.5,376.3 1769.5,376.2 1774.6,376.2C1779.9,376.2 1779.9,401.9 1785.2,401.9C1790.6,401.9 1790.6,401.9 1795.9,401.9C1801.1,401.9 1801.1,372.1 1806.2,372.1C1811.2,372.1 1811.2,372.1 1816.2,372.1C1821.5,372.1 1821.5,402.5 1826.9,402.5C1832.4,402.5 1832.4,401.7 1838.0,401.7C1843.8,401.7 1843.8,380.3 1849.6,380.3C1855.6,380.3 1855.6,378.3 1861.6,378.3" fill="none" stroke="#f08a8c" stroke-width=".7" opacity="0.75"/>
<path d="M1519.9,401.7C1524.9,401.7 1524.9,399.6 1529.9,399.6C1533.8,399.6 1533.8,378.1 1537.8,378.1C1541.2,378.1 1541.2,380.5 1544.5,380.5C1548.0,380.5 1548.0,402.4 1551.5,402.4C1555.1,402.4 1555.1,404.1 1558.7,404.1C1561.5,404.1 1561.5,386.7 1564.4,386.7C1566.7,386.7 1566.7,387.4 1569.1,387.4C1571.7,387.4 1571.7,401.2 1574.4,401.2C1577.3,401.2 1577.3,403.1 1580.1,403.1C1583.5,403.1 1583.5,402.6 1586.8,402.6C1590.4,402.6 1590.4,401.8 1594.1,401.8C1597.5,401.8 1597.5,371.5 1600.8,371.5C1604.0,371.5 1604.0,370.4 1607.2,370.4C1611.9,370.4 1611.9,384.0 1616.7,384.0C1622.4,384.0 1622.4,385.7 1628.2,385.7C1633.5,385.7 1633.5,401.3 1638.7,401.3C1643.6,401.3 1643.6,402.6 1648.5,402.6C1652.5,402.6 1652.5,375.3 1656.4,375.3C1659.7,375.3 1659.7,375.1 1663.1,375.1C1667.6,375.1 1667.6,400.7 1672.0,400.7C1677.3,400.7 1677.3,400.5 1682.5,400.5C1687.4,400.5 1687.4,402.3 1692.3,402.3C1697.0,402.3 1697.0,400.5 1701.7,400.5C1707.0,400.5 1707.0,367.5 1712.2,367.5C1717.9,367.5 1717.9,368.1 1723.6,368.1C1728.2,368.1 1728.2,402.0 1732.8,402.0C1736.7,402.0 1736.7,402.6 1740.6,402.6C1745.4,402.6 1745.4,373.1 1750.1,373.1C1755.5,373.1 1755.5,374.2 1760.9,374.2C1766.4,374.2 1766.4,400.8 1771.8,400.8C1777.3,400.8 1777.3,403.0 1782.8,403.0C1787.2,403.0 1787.2,366.6 1791.5,366.6C1795.1,366.6 1795.1,364.5 1798.7,364.5C1803.0,364.5 1803.0,372.3 1807.3,372.3C1812.1,372.3 1812.1,371.4 1816.8,371.4C1820.5,371.4 1820.5,402.1 1824.1,402.1C1826.9,402.1 1826.9,403.9 1829.7,403.9C1832.4,403.9 1832.4,402.0 1835.0,402.0C1837.6,402.0 1837.6,404.0 1840.1,404.0C1843.8,404.0 1843.8,371.5 1847.5,371.5C1852.0,371.5 1852.0,369.8 1856.5,369.8" fill="none" stroke="#f5a3a4" stroke-width=".7" opacity="0.75"/>
<path d="M1520.3,388.3C1525.5,388.3 1525.5,390.5 1530.7,390.5C1534.3,390.5 1534.3,401.7 1537.8,401.7C1540.1,401.7 1540.1,403.9 1542.5,403.9C1545.0,403.9 1545.0,391.8 1547.6,391.8C1550.2,391.8 1550.2,391.7 1552.9,391.7C1556.6,391.7 1556.6,400.5 1560.3,400.5C1564.7,400.5 1564.7,399.1 1569.1,399.1C1574.0,399.1 1574.0,392.2 1578.8,392.2C1583.9,392.2 1583.9,390.5 1589.1,390.5C1593.8,390.5 1593.8,400.8 1598.6,400.8C1603.2,400.8 1603.2,398.3 1607.8,398.3C1611.4,398.3 1611.4,403.0 1615.1,403.0C1618.1,403.0 1618.1,404.8 1621.2,404.8C1625.0,404.8 1625.0,393.2 1628.8,393.2C1633.0,393.2 1633.0,394.0 1637.3,394.0C1641.9,394.0 1641.9,402.9 1646.5,402.9C1651.4,402.9 1651.4,404.9 1656.2,404.9C1659.9,404.9 1659.9,379.9 1663.5,379.9C1666.4,379.9 1666.4,378.2 1669.3,378.2C1673.1,378.2 1673.1,400.5 1677.0,400.5C1681.5,400.5 1681.5,401.4 1686.0,401.4C1691.0,401.4 1691.0,378.8 1696.0,378.8C1701.3,378.8 1701.3,378.7 1706.7,378.7C1711.7,378.7 1711.7,400.6 1716.8,400.6C1721.7,400.6 1721.7,403.0 1726.6,403.0C1731.8,403.0 1731.8,388.5 1737.0,388.5C1742.4,388.5 1742.4,386.1 1747.8,386.1C1752.6,386.1 1752.6,400.5 1757.5,400.5C1761.9,400.5 1761.9,398.3 1766.3,398.3C1769.9,398.3 1769.9,393.0 1773.4,393.0C1776.4,393.0 1776.4,394.3 1779.4,394.3C1782.7,394.3 1782.7,392.7 1786.0,392.7C1789.6,392.7 1789.6,392.0 1793.1,392.0C1796.1,392.0 1796.1,402.4 1799.1,402.4C1801.8,402.4 1801.8,403.9 1804.4,403.9C1809.0,403.9 1809.0,400.7 1813.5,400.7C1819.3,400.7 1819.3,399.9 1825.1,399.9C1829.6,399.9 1829.6,392.2 1834.0,392.2C1837.5,392.2 1837.5,394.3 1841.0,394.3C1844.5,394.3 1844.5,400.9 1848.0,400.9C1851.4,400.9 1851.4,398.8 1854.9,398.8C1859.8,398.8 1859.8,387.2 1864.8,387.2C1870.8,387.2 1870.8,385.5 1876.8,385.5" fill="none" stroke="#e86a3a" stroke-width=".7" opacity="0.55"/>
<path d="M1517.9,400.5C1521.1,400.5 1521.1,401.3 1524.3,401.3C1527.8,401.3 1527.8,376.2 1531.3,376.2C1535.0,376.2 1535.0,377.5 1538.6,377.5C1543.1,377.5 1543.1,401.5 1547.5,401.5C1552.5,401.5 1552.5,401.7 1557.5,401.7C1562.1,401.7 1562.1,367.1 1566.7,367.1C1571.0,367.1 1571.0,368.6 1575.3,368.6C1579.9,368.6 1579.9,402.6 1584.6,402.6C1589.4,402.6 1589.4,401.8 1594.2,401.8C1599.3,401.8 1599.3,376.8 1604.4,376.8C1609.6,376.8 1609.6,376.5 1614.9,376.5C1619.8,376.5 1619.8,401.2 1624.7,401.2C1629.3,401.2 1629.3,403.5 1633.9,403.5C1638.6,403.5 1638.6,367.2 1643.3,367.2C1648.0,367.2 1648.0,366.5 1652.7,366.5C1657.1,366.5 1657.1,378.6 1661.5,378.6C1665.7,378.6 1665.7,379.3 1669.9,379.3C1675.1,379.3 1675.1,400.6 1680.3,400.6C1686.2,400.6 1686.2,399.9 1692.1,399.9C1697.2,399.9 1697.2,368.9 1702.2,368.9C1706.7,368.9 1706.7,366.8 1711.1,366.8C1714.5,366.8 1714.5,372.4 1717.9,372.4C1720.6,372.4 1720.6,373.2 1723.3,373.2C1726.8,373.2 1726.8,400.8 1730.3,400.8C1734.4,400.8 1734.4,399.4 1738.4,399.4C1741.4,399.4 1741.4,402.4 1744.5,402.4C1746.7,402.4 1746.7,400.0 1749.0,400.0C1752.7,400.0 1752.7,378.5 1756.4,378.5C1761.0,378.5 1761.0,377.5 1765.5,377.5C1769.0,377.5 1769.0,403.0 1772.5,403.0C1775.2,403.0 1775.2,400.8 1777.9,400.8C1781.2,400.8 1781.2,375.9 1784.6,375.9C1788.3,375.9 1788.3,378.3 1792.1,378.3C1796.9,378.3 1796.9,402.2 1801.8,402.2C1807.4,402.2 1807.4,404.1 1813.0,404.1C1818.3,404.1 1818.3,377.3 1823.7,377.3C1829.0,377.3 1829.0,377.4 1834.2,377.4C1838.6,377.4 1838.6,400.7 1842.9,400.7C1846.7,400.7 1846.7,401.9 1850.5,401.9C1855.1,401.9 1855.1,371.8 1859.7,371.8C1864.9,371.8 1864.9,370.2 1870.1,370.2" fill="none" stroke="#8fc58a" stroke-width=".7" opacity="0.6"/>
<path d="M1518.5,383.0C1522.2,383.0 1522.2,380.7 1525.9,380.7C1530.1,380.7 1530.1,402.8 1534.2,402.8C1538.7,402.8 1538.7,401.3 1543.1,401.3C1546.8,401.3 1546.8,372.4 1550.4,372.4C1553.6,372.4 1553.6,372.6 1556.8,372.6C1561.5,372.6 1561.5,402.1 1566.2,402.1C1572.0,402.1 1572.0,402.5 1577.8,402.5C1581.6,402.5 1581.6,375.7 1585.4,375.7C1587.8,375.7 1587.8,374.3 1590.3,374.3C1593.5,374.3 1593.5,401.9 1596.8,401.9C1600.6,401.9 1600.6,402.2 1604.5,402.2C1607.6,402.2 1607.6,377.6 1610.7,377.6C1613.3,377.6 1613.3,378.0 1616.0,378.0C1620.0,378.0 1620.0,401.9 1624.0,401.9C1628.9,401.9 1628.9,402.5 1633.8,402.5C1638.9,402.5 1638.9,374.6 1643.9,374.6C1649.1,374.6 1649.1,374.5 1654.3,374.5C1658.2,374.5 1658.2,371.2 1662.2,371.2C1665.4,371.2 1665.4,369.6 1668.6,369.6C1671.9,369.6 1671.9,401.7 1675.2,401.7C1678.6,401.7 1678.6,401.0 1681.9,401.0C1684.8,401.0 1684.8,376.2 1687.7,376.2C1690.2,376.2 1690.2,376.2 1692.7,376.2C1697.2,376.2 1697.2,401.6 1701.6,401.6C1707.4,401.6 1707.4,403.9 1713.1,403.9C1718.6,403.9 1718.6,375.2 1724.0,375.2C1729.2,375.2 1729.2,376.8 1734.4,376.8C1739.0,376.8 1739.0,402.5 1743.5,402.5C1747.6,402.5 1747.6,400.3 1751.7,400.3C1756.3,400.3 1756.3,369.4 1760.9,369.4C1765.7,369.4 1765.7,367.2 1770.6,367.2C1775.2,367.2 1775.2,402.2 1779.8,402.2C1784.2,402.2 1784.2,401.9 1788.6,401.9C1792.5,401.9 1792.5,381.7 1796.4,381.7C1800.0,381.7 1800.0,383.9 1803.5,383.9C1807.4,383.9 1807.4,401.0 1811.3,401.0C1815.4,401.0 1815.4,400.0 1819.5,400.0C1824.5,400.0 1824.5,372.0 1829.6,372.0C1835.3,372.0 1835.3,371.9 1841.0,371.9C1845.2,371.9 1845.2,400.8 1849.5,400.8C1852.7,400.8 1852.7,400.5 1856.0,400.5" fill="none" stroke="#7fb2d8" stroke-width=".7" opacity="0.55"/>
<path d="M1517.9,385.9C1521.2,385.9 1521.2,384.4 1524.4,384.4C1528.1,384.4 1528.1,402.0 1531.8,402.0C1535.8,402.0 1535.8,401.2 1539.8,401.2C1544.4,401.2 1544.4,400.9 1548.9,400.9C1553.9,400.9 1553.9,403.2 1558.9,403.2C1562.6,403.2 1562.6,400.6 1566.3,400.6C1569.2,400.6 1569.2,398.8 1572.1,398.8C1574.8,398.8 1574.8,402.2 1577.4,402.2C1579.9,402.2 1579.9,403.7 1582.4,403.7C1585.2,403.7 1585.2,401.1 1588.0,401.1C1591.0,401.1 1591.0,402.5 1594.0,402.5C1598.6,402.5 1598.6,401.5 1603.2,401.5C1608.9,401.5 1608.9,400.7 1614.6,400.7C1618.2,400.7 1618.2,388.4 1621.8,388.4C1624.1,388.4 1624.1,388.0 1626.4,388.0C1628.9,388.0 1628.9,392.0 1631.5,392.0C1634.3,392.0 1634.3,390.7 1637.1,390.7C1641.7,390.7 1641.7,400.5 1646.3,400.5C1652.2,400.5 1652.2,401.8 1658.0,401.8C1662.5,401.8 1662.5,392.2 1666.9,392.2C1670.4,392.2 1670.4,394.1 1673.9,394.1C1677.8,394.1 1677.8,401.9 1681.6,401.9C1685.8,401.9 1685.8,402.1 1689.9,402.1C1693.3,402.1 1693.3,371.8 1696.8,371.8C1699.7,371.8 1699.7,373.1 1702.7,373.1C1707.4,373.1 1707.4,402.3 1712.0,402.3C1717.8,402.3 1717.8,400.0 1723.6,400.0C1729.1,400.0 1729.1,387.8 1734.7,387.8C1740.2,387.8 1740.2,389.0 1745.6,389.0C1749.2,389.0 1749.2,402.7 1752.8,402.7C1755.2,402.7 1755.2,402.2 1757.6,402.2C1761.0,402.2 1761.0,402.3 1764.4,402.3C1768.6,402.3 1768.6,404.1 1772.7,404.1C1777.3,404.1 1777.3,384.7 1781.8,384.7C1786.7,384.7 1786.7,386.5 1791.5,386.5C1795.6,386.5 1795.6,401.0 1799.7,401.0C1803.3,401.0 1803.3,399.5 1806.9,399.5C1810.6,399.5 1810.6,402.0 1814.2,402.0C1817.9,402.0 1817.9,399.5 1821.6,399.5C1825.0,399.5 1825.0,375.8 1828.4,375.8C1831.7,375.8 1831.7,377.3 1835.0,377.3C1838.8,377.3 1838.8,400.6 1842.6,400.6C1846.8,400.6 1846.8,400.0 1851.0,400.0C1854.8,400.0 1854.8,381.1 1858.6,381.1C1862.1,381.1 1862.1,382.5 1865.7,382.5" fill="none" stroke="#ef6b6d" stroke-width=".7" opacity="0.6"/>
<path d="M1514,402.5 H1858" stroke="#e83b3e" stroke-width="1.5" opacity=".85"/>
<path d="M1514,401.2 H1858" stroke="#ee6a6c" stroke-width=".8" opacity=".55"/>
<rect x="1513.6" y="417.0" width="6.4" height="4" fill="#f0822c"/><rect x="1521.6" y="418.1" width="15" height="1.7" fill="#666" opacity=".7"/>
<rect x="1600.4" y="417.0" width="6.4" height="4" fill="#b5243c"/><rect x="1608.4" y="418.1" width="15" height="1.7" fill="#666" opacity=".7"/>
<rect x="1687.2" y="417.0" width="6.4" height="4" fill="#58a845"/><rect x="1695.2" y="418.1" width="15" height="1.7" fill="#666" opacity=".7"/>
<rect x="1774.0" y="417.0" width="6.4" height="4" fill="#3d7fc0"/><rect x="1782.0" y="418.1" width="15" height="1.7" fill="#666" opacity=".7"/>
<rect x="1513.6" y="422.6" width="6.4" height="4" fill="#e8272a"/><rect x="1521.6" y="423.7" width="15" height="1.7" fill="#666" opacity=".7"/>
<rect x="1600.4" y="422.6" width="6.4" height="4" fill="#e8272a"/><rect x="1608.4" y="423.7" width="15" height="1.7" fill="#666" opacity=".7"/>
<rect x="1687.2" y="422.6" width="6.4" height="4" fill="#e8272a"/><rect x="1695.2" y="423.7" width="15" height="1.7" fill="#666" opacity=".7"/>
<rect x="1774.0" y="422.6" width="6.4" height="4" fill="#e8272a"/><rect x="1782.0" y="423.7" width="15" height="1.7" fill="#666" opacity=".7"/>
<rect x="1513.6" y="428.2" width="6.4" height="4" fill="#e8272a"/><rect x="1521.6" y="429.3" width="15" height="1.7" fill="#666" opacity=".7"/>
<rect x="1600.4" y="428.2" width="6.4" height="4" fill="#e8272a"/><rect x="1608.4" y="429.3" width="15" height="1.7" fill="#666" opacity=".7"/>
<rect x="1687.2" y="428.2" width="6.4" height="4" fill="#e8272a"/><rect x="1695.2" y="429.3" width="15" height="1.7" fill="#666" opacity=".7"/>
<rect x="1774.0" y="428.2" width="6.4" height="4" fill="#e8272a"/><rect x="1782.0" y="429.3" width="15" height="1.7" fill="#666" opacity=".7"/>
<path d="M1514,493 H1858" stroke="#e78aa8" stroke-width=".7"/><path d="M1514,499.8 H1858" stroke="#8ccf8a" stroke-width=".6"/>
<path d="M1516.5,508 l1.2,0 l-.8,5 l-1.2,0 z" fill="#a8245e"/><rect x="1520.5" y="507.5" width="9" height="1.6" fill="#666" opacity=".7"/><rect x="1520.5" y="513" width="36" height="1.6" fill="#666" opacity=".7"/>
<rect x="1699" y="510.2" width="1.8" height="1.8" fill="#5fb14f"/><rect x="1704" y="507.5" width="6" height="1.6" fill="#666" opacity=".7"/><rect x="1704" y="513" width="17" height="1.6" fill="#666" opacity=".7"/>
<path d="M1514,584.3 H1858" stroke="#9cc3e6" stroke-width=".9"/>
<path d="M1516,590 l3,0 l0,2 l1,0 l-2.5,3 l-2.5,-3 l1,0 z" fill="#3d7fc0"/><rect x="1524" y="591.5" width="12" height="1.6" fill="#666" opacity=".7"/><rect x="1670" y="591.5" width="11" height="1.6" fill="#666" opacity=".7"/>
<path d="M1692,595 l2.6,-4.6 l2.6,4.6 z" fill="#e0332c"/><rect x="1701" y="591.5" width="6" height="1.6" fill="#666" opacity=".7"/><rect x="1841" y="591.5" width="11" height="1.6" fill="#666" opacity=".7"/>
<rect x="1487" y="597" width="375" height="3" fill="#dfe8f4"/><rect x="1858.6" y="334.8" width="3.4" height="262" fill="#e4ebf5"/>
</svg>
</div>

<!-- clip region for lower panels (page y<959) -->
<div class="abs" style="left:0;top:0;width:1592px;height:826px;overflow:hidden">
<!-- ===== IPMI Monitor (All) panel ===== -->
<div class="panel" style="left:37px;top:513px;width:739px;height:330px">
  <div class="phead" style="height:56px"></div><div class="pstrip" style="top:56px"></div>
<svg class="abs" style="left:17px;top:9px" width="44" height="40" viewBox="368 656 44 40" fill="none" stroke="#5e5e5e">
<rect x="371" y="660" width="37.8" height="5.6" fill="#5e5e5e" stroke="none"/>
<path d="M374.5,665 V684.4 H405.3 V665" stroke-width="1.8"/>
<path d="M381,670.2 H391 M381,674.7 H400 M381,679.2 H396.6" stroke-width="1.7"/>
<path d="M389.8,684.6 V687.4" stroke-width="1.7"/><circle cx="389.8" cy="690.2" r="2.5" stroke-width="1.6"/></svg>
<div class="abs" style="left:71.6px;top:17.1px;font-size:20px;line-height:24px;color:#1b1b1b;white-space:nowrap;letter-spacing:0.15px">IPMI Monitor (All Parameters) 192.168.0.112</div>
<svg class="abs" style="left:702px;top:10px" width="24" height="24" viewBox="0 0 28 28" fill="none" stroke="#4a4a4a" stroke-width="1.9" stroke-linejoin="round"><path d="M12.1,4.8 L12.5,1.5 L15.5,1.5 L15.9,4.8 L19.2,6.1 L21.8,4.1 L23.9,6.2 L21.9,8.8 L23.2,12.1 L26.5,12.5 L26.5,15.5 L23.2,15.9 L21.9,19.2 L23.9,21.8 L21.8,23.9 L19.2,21.9 L15.9,23.2 L15.5,26.5 L12.5,26.5 L12.1,23.2 L8.8,21.9 L6.2,23.9 L4.1,21.8 L6.1,19.2 L4.8,15.9 L1.5,15.5 L1.5,12.5 L4.8,12.1 L6.1,8.8 L4.1,6.2 L6.2,4.1 L8.8,6.1 Z"/><circle cx="14" cy="14" r="4.4"/></svg>
<div class="abs" style="left:0;top:59px;width:737px;height:46px;background:#f5f5f5;border-bottom:1px solid #c6c6c6"></div>
<div class="abs" style="left:239px;top:60px;width:1px;height:44px;background:#c6c6c6"></div>
<div class="abs" style="left:239px;top:105px;width:1px;height:220px;background:#ececec"></div>
<div class="abs" style="left:479px;top:60px;width:1px;height:44px;background:#c6c6c6"></div>
<div class="abs" style="left:479px;top:105px;width:1px;height:220px;background:#ececec"></div>
<div class="abs" style="left:13.0px;top:70.9px;font-size:18.5px;line-height:24px;color:#5c5c5c;white-space:nowrap;font-weight:700;letter-spacing:-0.16px">Metric Name</div>
<div class="abs" style="left:331.6px;top:70.9px;font-size:18.5px;line-height:24px;color:#5c5c5c;white-space:nowrap;font-weight:700;letter-spacing:-0.01px">Status</div>
<div class="abs" style="left:643.6px;top:70.9px;font-size:18.5px;line-height:24px;color:#5c5c5c;white-space:nowrap;font-weight:700;letter-spacing:-0.09px">Value</div>
<div class="abs" style="left:0;top:106px;width:718px;height:43px;background:#fff;border-bottom:1px solid #ececec;border-right:1px solid #e6e6e6"></div>
<div class="abs" style="left:0;top:149px;width:718px;height:43px;background:#f9f9f9;border-bottom:1px solid #ececec;border-right:1px solid #e6e6e6"></div>
<div class="abs" style="left:0;top:192px;width:718px;height:43px;background:#fff;border-bottom:1px solid #ececec;border-right:1px solid #e6e6e6"></div>
<div class="abs" style="left:0;top:235px;width:718px;height:43px;background:#f9f9f9;border-bottom:1px solid #ececec;border-right:1px solid #e6e6e6"></div>
<div class="abs" style="left:0;top:278px;width:718px;height:43px;background:#fff;border-bottom:1px solid #ececec;border-right:1px solid #e6e6e6"></div>
<div class="abs" style="left:239px;top:105px;width:1px;height:220px;background:#e9e9e9"></div>
<div class="abs" style="left:479px;top:105px;width:1px;height:220px;background:#e9e9e9"></div>
<div class="abs" style="left:13.0px;top:116.1px;font-size:17.5px;line-height:24px;color:#444;white-space:nowrap;letter-spacing:-0.18px">CPU1 Temp</div>
<div class="abs" style="left:331.2px;top:117.1px;font-size:17.5px;line-height:24px;color:#6ebc42;white-space:nowrap;letter-spacing:0.28px">Normal</div>
<div class="abs" style="left:662.6px;top:116.1px;font-size:17.5px;line-height:24px;color:#444;white-space:nowrap;letter-spacing:-0.24px">43 °C</div>
<div class="abs" style="left:13.0px;top:159.1px;font-size:17.5px;line-height:24px;color:#444;white-space:nowrap;letter-spacing:-0.11px">PCH Temp</div>
<div class="abs" style="left:331.2px;top:160.1px;font-size:17.5px;line-height:24px;color:#6ebc42;white-space:nowrap;letter-spacing:0.28px">Normal</div>
<div class="abs" style="left:662.6px;top:159.1px;font-size:17.5px;line-height:24px;color:#444;white-space:nowrap;letter-spacing:-0.24px">62 °C</div>
<div class="abs" style="left:13.0px;top:202.1px;font-size:17.5px;line-height:24px;color:#444;white-space:nowrap;letter-spacing:0.23px">System Temp</div>
<div class="abs" style="left:331.2px;top:203.1px;font-size:17.5px;line-height:24px;color:#6ebc42;white-space:nowrap;letter-spacing:0.28px">Normal</div>
<div class="abs" style="left:662.6px;top:202.1px;font-size:17.5px;line-height:24px;color:#444;white-space:nowrap;letter-spacing:-0.24px">38 °C</div>
<div class="abs" style="left:13.0px;top:245.1px;font-size:17.5px;line-height:24px;color:#444;white-space:nowrap;letter-spacing:0.08px">Peripheral Temp</div>
<div class="abs" style="left:331.2px;top:246.1px;font-size:17.5px;line-height:24px;color:#6ebc42;white-space:nowrap;letter-spacing:0.28px">Normal</div>
<div class="abs" style="left:662.6px;top:245.1px;font-size:17.5px;line-height:24px;color:#444;white-space:nowrap;letter-spacing:-0.24px">63 °C</div>
<div class="abs" style="left:13.0px;top:288.1px;font-size:17.5px;line-height:24px;color:#444;white-space:nowrap;letter-spacing:0.06px">Vcpu1VRM Temp</div>
<div class="abs" style="left:331.2px;top:289.1px;font-size:17.5px;line-height:24px;color:#6ebc42;white-space:nowrap;letter-spacing:0.28px">Normal</div>
<div class="abs" style="left:662.6px;top:288.1px;font-size:17.5px;line-height:24px;color:#444;white-space:nowrap;letter-spacing:-0.24px">40 °C</div>
<div class="abs" style="left:717px;top:105px;width:3px;height:220px;background:#fff"></div>
<div class="abs" style="left:720px;top:105px;width:17px;height:220px;background:#f1f1f1"></div>
<div class="abs" style="left:722px;top:122px;width:13px;height:50px;background:#c1c1c1"></div>
<div class="abs" style="left:724px;top:112px;width:0;height:0;border-left:4px solid transparent;border-right:4px solid transparent;border-bottom:5px solid #a3a3a3"></div>
</div>
<!-- ===== Single param panel ===== -->
<div class="panel" style="left:788px;top:513px;width:739px;height:330px">
  <div class="phead" style="height:56px"></div><div class="pstrip" style="top:56px"></div>
<svg class="abs" style="left:16px;top:8px" width="46" height="42" viewBox="1118 655 46 42">
<path d="M1126,663.8 H1157 M1126,670 H1157 M1126,676.3 H1157" stroke="#d2d2d2" stroke-width=".8"/>
<path d="M1122.6,658.6 V692.2 H1160" fill="none" stroke="#8c8c8a" stroke-width="2"/>
<path d="M1126.2,687.6 L1130.7,678.2 L1133.2,681.9 L1138.3,671.4 L1140.8,676.3 L1143.6,673.8 L1146.7,673.5 L1151.7,682.5 L1156.2,677 V687.6 Z" fill="#686866"/></svg>
<div class="abs" style="left:71.4px;top:17.3px;font-size:20px;line-height:24px;color:#1b1b1b;white-space:nowrap;letter-spacing:-0.06px">IPMI Monitor (Single Parameter - Live) - CPU1 Temp</div>
<svg class="abs" style="left:671px;top:10px" width="25" height="25" viewBox="0 0 25 25" fill="none" stroke="#444">
<path d="M4.3,17.1 A9.4,9.4 0 1 1 10.9,21.7" stroke-width="1.7"/><path d="M1.4,15.4 L7.2,14.2 L5,20 Z" fill="#444" stroke="none"/><path d="M12.7,13 L14.2,7.8 M12.5,12.6 L17,14.8" stroke-width="2.1"/></svg>
<svg class="abs" style="left:702px;top:10px" width="24" height="24" viewBox="0 0 28 28" fill="none" stroke="#4a4a4a" stroke-width="1.9" stroke-linejoin="round"><path d="M12.1,4.8 L12.5,1.5 L15.5,1.5 L15.9,4.8 L19.2,6.1 L21.8,4.1 L23.9,6.2 L21.9,8.8 L23.2,12.1 L26.5,12.5 L26.5,15.5 L23.2,15.9 L21.9,19.2 L23.9,21.8 L21.8,23.9 L19.2,21.9 L15.9,23.2 L15.5,26.5 L12.5,26.5 L12.1,23.2 L8.8,21.9 L6.2,23.9 L4.1,21.8 L6.1,19.2 L4.8,15.9 L1.5,15.5 L1.5,12.5 L4.8,12.1 L6.1,8.8 L4.1,6.2 L6.2,4.1 L8.8,6.1 Z"/><circle cx="14" cy="14" r="4.4"/></svg>
<svg class="abs" style="left:0px;top:61px" width="728" height="270" viewBox="1102 708 728 270" font-family="Liberation Sans, sans-serif">
<text x="1132.6" y="732.8" font-size="19.2" fill="#222" textLength="127.6" lengthAdjust="spacing">192.168.0.112</text>
<path d="M1176.6,762.0 H1820.8" stroke="#dedede" stroke-width="1.2"/>
<path d="M1176.6,798.3 H1820.8" stroke="#dedede" stroke-width="1.2"/>
<path d="M1176.6,834.5 H1820.8" stroke="#dedede" stroke-width="1.2"/>
<path d="M1176.6,870.8 H1820.8" stroke="#dedede" stroke-width="1.2"/>
<path d="M1176.6,907.0 H1820.8" stroke="#dedede" stroke-width="1.2"/>
<path d="M1176.6,853.7 L1268.2,851.6 H1820.8 V943.3 H1176.6 Z" fill="#a5bb36" fill-opacity=".92" stroke="#94a82c" stroke-width=".8"/>
<path d="M1170.4,762.0 H1176.6" stroke="#222" stroke-width="1.3"/>
<text x="1168" y="768.0" font-size="16.2" fill="#444" text-anchor="end">85</text>
<path d="M1170.4,798.3 H1176.6" stroke="#222" stroke-width="1.3"/>
<text x="1168" y="804.3" font-size="16.2" fill="#444" text-anchor="end">68</text>
<path d="M1170.4,834.5 H1176.6" stroke="#222" stroke-width="1.3"/>
<text x="1168" y="840.5" font-size="16.2" fill="#444" text-anchor="end">51</text>
<path d="M1170.4,870.8 H1176.6" stroke="#222" stroke-width="1.3"/>
<text x="1168" y="876.8" font-size="16.2" fill="#444" text-anchor="end">34</text>
<path d="M1170.4,907.0 H1176.6" stroke="#222" stroke-width="1.3"/>
<text x="1168" y="913.0" font-size="16.2" fill="#444" text-anchor="end">17</text>
<path d="M1170.4,943.3 H1176.6" stroke="#222" stroke-width="1.3"/>
<text x="1164.2" y="949.3" font-size="16.2" fill="#444" text-anchor="end">0</text>
<path d="M1176.6,761.0 V943.3 H1821.6" fill="none" stroke="#111" stroke-width="1.9"/>
<path d="M1176.6,943.3 V948.9" stroke="#111" stroke-width="1.6"/>
<text x="1177.6" y="968.2" font-size="16.2" fill="#444" text-anchor="middle">15:18:20</text>
<path d="M1268.6,943.3 V948.9" stroke="#111" stroke-width="1.6"/>
<text x="1269.6" y="968.2" font-size="16.2" fill="#444" text-anchor="middle">15:18:30</text>
<path d="M1360.7,943.3 V948.9" stroke="#111" stroke-width="1.6"/>
<text x="1361.7" y="968.2" font-size="16.2" fill="#444" text-anchor="middle">15:18:40</text>
<path d="M1452.7,943.3 V948.9" stroke="#111" stroke-width="1.6"/>
<text x="1453.7" y="968.2" font-size="16.2" fill="#444" text-anchor="middle">15:18:50</text>
<path d="M1544.7,943.3 V948.9" stroke="#111" stroke-width="1.6"/>
<text x="1545.7" y="968.2" font-size="16.2" fill="#444" text-anchor="middle">15:19:00</text>
<path d="M1636.7,943.3 V948.9" stroke="#111" stroke-width="1.6"/>
<text x="1637.7" y="968.2" font-size="16.2" fill="#444" text-anchor="middle">15:19:10</text>
<path d="M1728.8,943.3 V948.9" stroke="#111" stroke-width="1.6"/>
<text x="1729.8" y="968.2" font-size="16.2" fill="#444" text-anchor="middle">15:19:20</text>
<path d="M1820.8,943.3 V948.9" stroke="#111" stroke-width="1.6"/>
<text x="1821.8" y="968.2" font-size="16.2" fill="#444" text-anchor="middle">15:19:30</text>
<text transform="translate(1143.2,856.4) rotate(-90)" font-size="20.5" fill="#333" text-anchor="middle" textLength="152" lengthAdjust="spacing">Temperature (°C)</text>
</svg>
</div>
</div>
<!-- red highlight -->
<div class="abs" style="left:780px;top:506px;width:756px;height:331px;border:4px solid #ec1c24;border-radius:3px"></div>
</div>

</div>
</body>
</html>
